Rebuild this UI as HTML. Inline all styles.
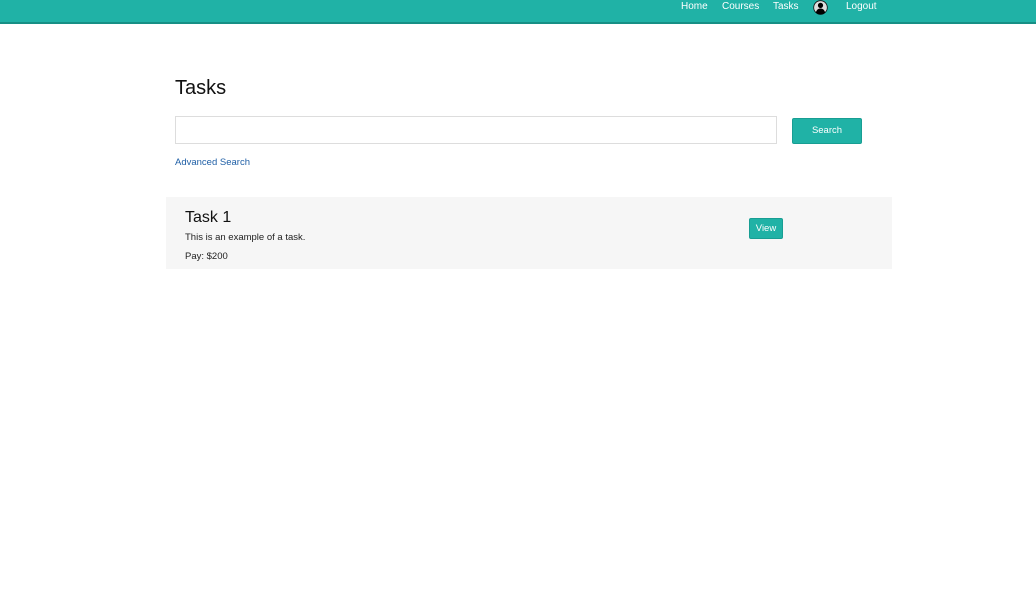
<!DOCTYPE html>
<html><head><meta charset="utf-8"><style>
body{margin:0;width:1036px;height:600px;background:#fff;font-family:"Liberation Sans",sans-serif;position:relative;overflow:hidden}
.nav{position:absolute;left:0;top:0;width:1036px;height:22px;background:#20b2a6;border-bottom:2px solid #178f85}
.nav span{position:absolute;top:1px;color:#fff;font-size:10px}
h1{position:absolute;left:175px;top:77px;margin:0;font-size:20px;font-weight:normal;color:#111}
.inp{position:absolute;left:175px;top:116px;width:600px;height:26px;border:1px solid #ddd}
.btn{position:absolute;background:#20b2a6;color:#fff;border:1px solid #189e93;border-radius:2px;text-align:center;font-size:9.5px}
.adv{position:absolute;left:175px;top:157px;font-size:9.5px;color:#1f5fa6}
.card{position:absolute;left:166px;top:197px;width:726px;height:72px;background:#f6f6f6}
.card .t{position:absolute;left:19px;top:12px;font-size:16px;color:#111}
.card .d{position:absolute;left:19px;top:35px;font-size:9.5px;color:#222}
.card .p{position:absolute;left:19px;top:54px;font-size:9.5px;color:#222}
</style></head><body>
<div class="nav">
<span style="left:681px">Home</span>
<span style="left:722px">Courses</span>
<span style="left:773px">Tasks</span>
<svg style="position:absolute;left:813px;top:0" width="15" height="15" viewBox="0 0 15 15"><circle cx="7.5" cy="7.5" r="6.8" fill="#ddd" stroke="#111" stroke-width="0.8"/><circle cx="7.5" cy="5.4" r="2.6" fill="#000"/><path d="M2.8 12.5c1-3 2.6-4 4.7-4s3.7 1 4.7 4c-1.2 1.3-2.8 2-4.7 2s-3.5-.7-4.7-2z" fill="#000"/></svg>
<span style="left:846px">Logout</span>
</div>
<h1>Tasks</h1>
<div class="inp"></div>
<div class="btn" style="left:792px;top:118px;width:68px;height:24px;line-height:24px">Search</div>
<div class="adv">Advanced Search</div>
<div class="card">
<div class="t">Task 1</div>
<div class="d">This is an example of a task.</div>
<div class="p">Pay: $200</div>
<div class="btn" style="left:583px;top:21px;width:32px;height:19px;line-height:19px">View</div>
</div>
</body></html>
